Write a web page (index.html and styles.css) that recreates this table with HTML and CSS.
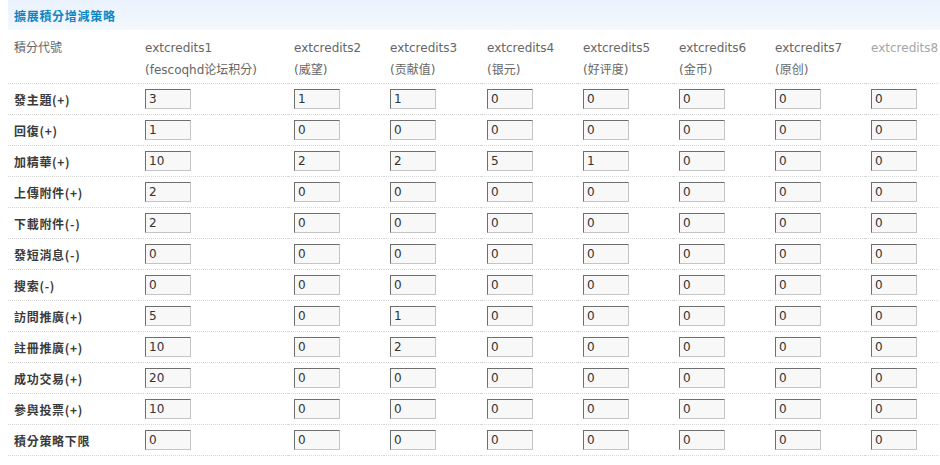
FILE: index.html
```html
<!DOCTYPE html>
<html lang="zh-Hant">
<head>
<meta charset="utf-8">
<title>擴展積分增減策略</title>
<link rel="stylesheet" href="styles.css">
</head>
<body>
<div class="page">
  <div class="titlebar">擴展積分增減策略</div>
  <table class="policy">
    <colgroup>
      <col class="c-label"><col class="c-first"><col class="c-std"><col class="c-std3"><col class="c-std"><col class="c-std"><col class="c-std"><col class="c-std"><col class="c-std">
    </colgroup>
    <thead>
      <tr>
        <th>積分代號</th>
        <th class="nowrap">extcredits1<br>(fescoqhd论坛积分)</th>
        <th>extcredits2<br>(威望)</th>
        <th>extcredits3<br>(贡献值)</th>
        <th>extcredits4<br>(银元)</th>
        <th>extcredits5<br>(好评度)</th>
        <th>extcredits6<br>(金币)</th>
        <th>extcredits7<br>(原创)</th>
        <th class="disabled">extcredits8</th>
      </tr>
    </thead>
    <tbody>
      <tr><td class="label">發主題(+)</td><td><input class="num" value="3"></td><td><input class="num" value="1"></td><td><input class="num" value="1"></td><td><input class="num" value="0"></td><td><input class="num" value="0"></td><td><input class="num" value="0"></td><td><input class="num" value="0"></td><td><input class="num" value="0"></td></tr>
      <tr><td class="label">回復(+)</td><td><input class="num" value="1"></td><td><input class="num" value="0"></td><td><input class="num" value="0"></td><td><input class="num" value="0"></td><td><input class="num" value="0"></td><td><input class="num" value="0"></td><td><input class="num" value="0"></td><td><input class="num" value="0"></td></tr>
      <tr><td class="label">加精華(+)</td><td><input class="num" value="10"></td><td><input class="num" value="2"></td><td><input class="num" value="2"></td><td><input class="num" value="5"></td><td><input class="num" value="1"></td><td><input class="num" value="0"></td><td><input class="num" value="0"></td><td><input class="num" value="0"></td></tr>
      <tr><td class="label">上傳附件(+)</td><td><input class="num" value="2"></td><td><input class="num" value="0"></td><td><input class="num" value="0"></td><td><input class="num" value="0"></td><td><input class="num" value="0"></td><td><input class="num" value="0"></td><td><input class="num" value="0"></td><td><input class="num" value="0"></td></tr>
      <tr><td class="label">下載附件(-)</td><td><input class="num" value="2"></td><td><input class="num" value="0"></td><td><input class="num" value="0"></td><td><input class="num" value="0"></td><td><input class="num" value="0"></td><td><input class="num" value="0"></td><td><input class="num" value="0"></td><td><input class="num" value="0"></td></tr>
      <tr><td class="label">發短消息(-)</td><td><input class="num" value="0"></td><td><input class="num" value="0"></td><td><input class="num" value="0"></td><td><input class="num" value="0"></td><td><input class="num" value="0"></td><td><input class="num" value="0"></td><td><input class="num" value="0"></td><td><input class="num" value="0"></td></tr>
      <tr><td class="label">搜索(-)</td><td><input class="num" value="0"></td><td><input class="num" value="0"></td><td><input class="num" value="0"></td><td><input class="num" value="0"></td><td><input class="num" value="0"></td><td><input class="num" value="0"></td><td><input class="num" value="0"></td><td><input class="num" value="0"></td></tr>
      <tr><td class="label">訪問推廣(+)</td><td><input class="num" value="5"></td><td><input class="num" value="0"></td><td><input class="num" value="1"></td><td><input class="num" value="0"></td><td><input class="num" value="0"></td><td><input class="num" value="0"></td><td><input class="num" value="0"></td><td><input class="num" value="0"></td></tr>
      <tr><td class="label">註冊推廣(+)</td><td><input class="num" value="10"></td><td><input class="num" value="0"></td><td><input class="num" value="2"></td><td><input class="num" value="0"></td><td><input class="num" value="0"></td><td><input class="num" value="0"></td><td><input class="num" value="0"></td><td><input class="num" value="0"></td></tr>
      <tr><td class="label">成功交易(+)</td><td><input class="num" value="20"></td><td><input class="num" value="0"></td><td><input class="num" value="0"></td><td><input class="num" value="0"></td><td><input class="num" value="0"></td><td><input class="num" value="0"></td><td><input class="num" value="0"></td><td><input class="num" value="0"></td></tr>
      <tr><td class="label">參與投票(+)</td><td><input class="num" value="10"></td><td><input class="num" value="0"></td><td><input class="num" value="0"></td><td><input class="num" value="0"></td><td><input class="num" value="0"></td><td><input class="num" value="0"></td><td><input class="num" value="0"></td><td><input class="num" value="0"></td></tr>
      <tr><td class="label">積分策略下限</td><td><input class="num" value="0"></td><td><input class="num" value="0"></td><td><input class="num" value="0"></td><td><input class="num" value="0"></td><td><input class="num" value="0"></td><td><input class="num" value="0"></td><td><input class="num" value="0"></td><td><input class="num" value="0"></td></tr>
    </tbody>
  </table>
</div>
</body>
</html>
```

FILE: styles.css
```css
html, body {
  margin: 0;
  padding: 0;
  background: #fff;
  overflow: hidden;
}

body {
  font-family: "DejaVu Sans", "Noto Sans CJK TC", sans-serif;
  font-size: 12px;
  color: #666;
}

.page {
  padding-left: 8px;
  width: 970px;
}

.titlebar {
  height: 30px;
  line-height: 31px;
  padding-left: 6px;
  background: linear-gradient(#e9f2fd, #f4f8fe);
  color: #0c86c2;
  font-weight: bold;
  font-size: 12px;
  letter-spacing: 0.7px;
  font-family: "Noto Sans CJK TC", sans-serif;
}

.policy {
  border-collapse: collapse;
  table-layout: fixed;
  width: 953px;
}

.c-label { width: 131px; }
.c-first { width: 149px; }
.c-std { width: 96px; }
.c-std3 { width: 97px; }

.policy th {
  text-align: left;
  vertical-align: top;
  font-weight: normal;
  color: #666;
  line-height: 22px;
  padding: 7px 0 2px 6px;
  border-bottom: 1px dotted #d6d6d6;
  white-space: nowrap;
}

.policy th.disabled {
  color: #a6a6a6;
}

.policy td {
  padding: 5px 0 5px 6px;
  height: 20px;
  border-bottom: 1px dotted #d6d6d6;
  vertical-align: middle;
}

.policy td.label {
  font-weight: bold;
  color: #3a3a3a;
  font-family: "Noto Sans CJK TC", sans-serif;
  letter-spacing: 0.7px;
  white-space: nowrap;
}

.num {
  display: block;
  box-sizing: border-box;
  width: 46px;
  height: 20px;
  margin: 0;
  padding: 0 3px;
  border: 1px solid #c4c4c4;
  border-top-color: #6e6e6e;
  border-left-color: #6e6e6e;
  background: #f8f8f8;
  font-family: "DejaVu Sans", sans-serif;
  font-size: 12px;
  color: #333;
  outline: none;
}
```
